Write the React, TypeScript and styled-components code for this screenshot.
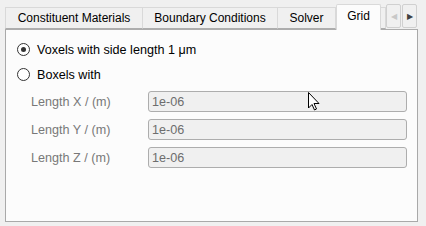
import React from "react";
import styled, { createGlobalStyle } from "styled-components";

const Global = createGlobalStyle`
	html, body {
		margin: 0;
		padding: 0;
		background: #f0f0f0;
		font-family: "Liberation Sans", Arial, sans-serif;
		font-size: 12px;
		color: #000;
	}
`;

const Window = styled.div`
	position: relative;
	width: 426px;
	height: 226px;
	padding: 4px 9px 0 5px;
	box-sizing: border-box;
	display: flex;
	flex-direction: column;
`;

const TabBar = styled.div`
	display: flex;
	align-items: flex-end;
	height: 25px;
	position: relative;
	z-index: 1;
`;

const Tab = styled.div<{ $active?: boolean; $w: number }>`
	box-sizing: border-box;
	width: ${({ $w }) => $w}px;
	height: ${({ $active }) => ($active ? 26 : 22)}px;
	margin-bottom: ${({ $active }) => ($active ? -1 : 0)}px;
	display: flex;
	align-items: center;
	justify-content: center;
	background: ${({ $active }) => ($active ? "#fcfcfc" : "#f0f0f0")};
	border: 1px solid #d9d9d9;
	border-bottom: ${({ $active }) => ($active ? "none" : "1px solid #adadad")};
	border-left: ${({ $active }) => ($active ? "1px solid #d9d9d9" : "none")};
	border-radius: ${({ $active }) => ($active ? "2px 2px 0 0" : "0")};
	white-space: nowrap;
	overflow: hidden;
	padding-bottom: ${({ $active }) => ($active ? 3 : 0)}px;
	&:first-child {
		border-left: 1px solid #d9d9d9;
	}
`;

const Scrollers = styled.div`
	display: flex;
	gap: 1px;
	height: 24px;
	align-self: flex-end;
	margin-bottom: 1px;
`;

const ScrollBtn = styled.div<{ $disabled?: boolean }>`
	width: 15px;
	box-sizing: border-box;
	border: 1px solid #d0d0d0;
	border-radius: 2px;
	background: #f0f0f0;
	display: flex;
	align-items: center;
	justify-content: center;
	color: ${({ $disabled }) => ($disabled ? "#c8c8c8" : "#404040")};
	font-size: 8px;
`;

const Pane = styled.div`
	box-sizing: border-box;
	width: 413px;
	height: 193px;
	background: #fcfcfc;
	border: 1px solid #a9a9a9;
	border-top-color: #adadad;
	padding: 13px 10px 0 10px;
	display: flex;
	flex-direction: column;
	font-size: 12.6px;
`;

const RadioRow = styled.label`
	display: flex;
	align-items: center;
	gap: 7px;
	height: 13px;
	margin-bottom: 12px;
	margin-left: 1px;
`;

const RadioDot = styled.span<{ $checked?: boolean }>`
	box-sizing: border-box;
	width: 13px;
	height: 13px;
	border-radius: 50%;
	border: 1px solid #333;
	background: #fff;
	display: flex;
	align-items: center;
	justify-content: center;
	&::after {
		content: "";
		width: 5px;
		height: 5px;
		border-radius: 50%;
		background: ${({ $checked }) => ($checked ? "#333" : "transparent")};
	}
`;

const Form = styled.div`
	display: grid;
	grid-template-columns: 117px 259px;
	grid-auto-rows: 21px;
	row-gap: 7px;
	padding-left: 15px;
	margin-top: -2px;
`;

const FieldLabel = styled.span`
	display: flex;
	align-items: center;
	color: #787878;
`;

const Field = styled.div`
	box-sizing: border-box;
	border: 1px solid #adadad;
	border-radius: 3px;
	background: #f0f0f0;
	color: #6d6d6d;
	padding-left: 3px;
	display: flex;
	align-items: center;
`;

const Cursor = styled.svg`
	position: absolute;
	left: 308px;
	top: 92px;
`;

const tabs = [
	{ label: "Constituent Materials", w: 138 },
	{ label: "Boundary Conditions", w: 135 },
	{ label: "Solver", w: 58 },
];

const fields = ["Length X / (m)", "Length Y / (m)", "Length Z / (m)"];

export default function App() {
	return (
		<Window>
			<Global />
			<TabBar>
				{tabs.map((t) => (
					<Tab key={t.label} $w={t.w}>{t.label}</Tab>
				))}
				<Tab $active $w={45}>Grid</Tab>
				<Tab $w={5} />
				<Scrollers>
					<ScrollBtn $disabled>◀</ScrollBtn>
					<ScrollBtn>▶</ScrollBtn>
				</Scrollers>
			</TabBar>
			<Pane>
				<RadioRow>
					<RadioDot $checked />
					Voxels with side length 1 μm
				</RadioRow>
				<RadioRow>
					<RadioDot />
					Boxels with
				</RadioRow>
				<Form>
					{fields.map((f) => (
						<React.Fragment key={f}>
							<FieldLabel>{f}</FieldLabel>
							<Field>1e-06</Field>
						</React.Fragment>
					))}
				</Form>
			</Pane>
			<Cursor width="12" height="19" viewBox="0 0 12 19">
				<path d="M0.5 0.5 L0.5 16 L4 12.5 L6.5 18 L8.5 17 L6 11.5 L11 11.5 Z" fill="#fff" stroke="#000" strokeWidth="1" />
			</Cursor>
		</Window>
	);
}
